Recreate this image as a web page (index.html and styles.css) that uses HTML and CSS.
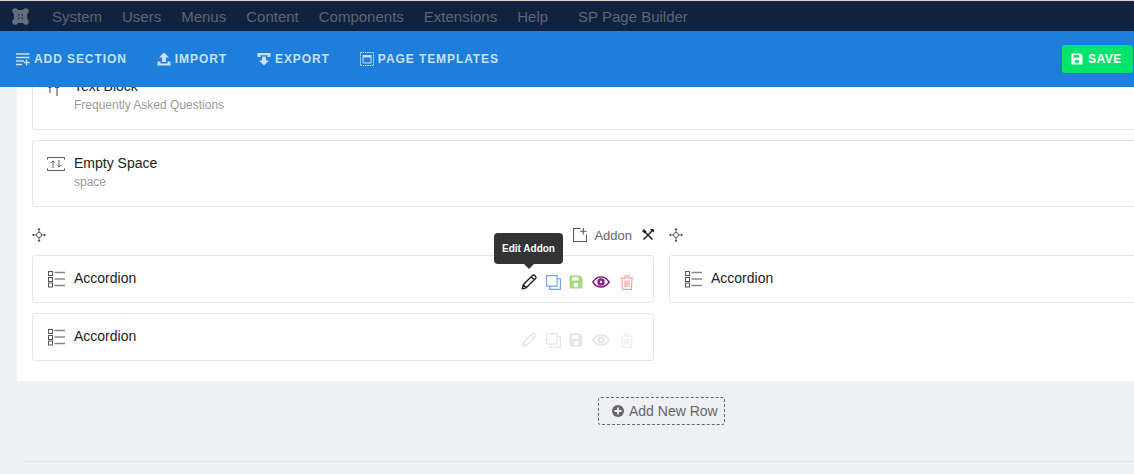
FILE: index.html
```html
<!DOCTYPE html>
<html lang="en">
<head>
<meta charset="utf-8">
<title>SP Page Builder</title>
<link rel="stylesheet" href="styles.css">
</head>
<body>
<svg class="defs" width="0" height="0" aria-hidden="true">
  <defs>
    <symbol id="i-move" viewBox="0 0 14 14"><g fill="none" stroke="currentColor" stroke-width="1"><circle cx="7" cy="7" r="2.500"/><path d="M7 0.500v4M7 9.500v4M0.500 7h4M9.500 7h4"/></g><path fill="currentColor" d="M7 0l1.600 2H5.400zM7 14l-1.600-2h3.200zM0 7l2-1.600v3.200zM14 7l-2 1.600V5.400z"/></symbol>
    <symbol id="i-list" viewBox="0 0 18 18"><g fill="none" stroke="currentColor" stroke-width="1"><rect x="1.500" y="1.500" width="4" height="4"/><rect x="1.500" y="7.500" width="4" height="4"/><rect x="1.500" y="13" width="4" height="4"/></g><path fill="none" stroke="currentColor" stroke-opacity=".7" stroke-width="1.300" d="M7.500 2.500h10.500M7.500 9h10.500M7.500 15.500h10.500"/></symbol>
    <symbol id="i-pencil" viewBox="0 0 16 16"><path fill="none" stroke="currentColor" stroke-width="1.300" stroke-linejoin="round" d="M1.200 14.800l1-4L11.500 1.500a1.500 1.500 0 0 1 2.100 0l.9.900a1.500 1.500 0 0 1 0 2.100L5.200 13.800zM2.200 10.800l3 3M10.200 2.800l3 3"/></symbol>
    <symbol id="i-copy" viewBox="0 0 15 15"><path fill="none" stroke="currentColor" stroke-width="1.100" d="M.6.600h10.500v10.500H.6zM11.100 3.800h3.300v10.600H3.800v-3.300"/></symbol>
    <symbol id="i-save" viewBox="0 0 14 14"><path fill="currentColor" fill-rule="evenodd" d="M1.500.5h9.500L13.500 3v9.500a1 1 0 0 1-1 1h-11a1 1 0 0 1-1-1v-11a1 1 0 0 1 1-1zM3 2.200v3.300h6.500V2.200zM7 7.700a2.300 2.300 0 1 0 0 4.600 2.300 2.300 0 0 0 0-4.600z"/></symbol>
    <symbol id="i-eye" viewBox="0 0 18 12"><path fill="none" stroke="currentColor" stroke-width="1.500" d="M.9 6C3 2.600 5.800 1 9 1s6 1.600 8.100 5C15 9.400 12.200 11 9 11S3 9.400.9 6z"/><circle cx="9" cy="6" r="3.700" fill="currentColor"/><circle cx="9" cy="6" r="1.200" fill="#fff"/></symbol>
    <symbol id="i-trash" viewBox="0 0 14 15"><path fill="none" stroke="currentColor" stroke-width="1.100" d="M.5 3h13M5 3V.8h4V3M2 3l.5 11.400h9L12 3M5 5.500v6.500M7 5.500v6.500M9 5.500v6.500"/></symbol>
  </defs>
</svg>

<header class="header">
  <nav class="nav">
    <svg class="nav-logo" viewBox="0 0 18 18" aria-hidden="true"><g fill="none" stroke="#666d7b" stroke-width="5.500"><path d="M4 4l10 10M14 4L4 14"/></g><g fill="#666d7b"><circle cx="3.300" cy="3.300" r="3"/><circle cx="14.700" cy="3.300" r="3"/><circle cx="3.300" cy="14.700" r="3"/><circle cx="14.700" cy="14.700" r="3"/><path d="M5 2h8v3H5zM5 13h8v3H5zM2 5h3v8H2zM13 5h3v8h-3z"/></g><g fill="#11223e"><rect x="6.500" y="6.500" width="1.500" height="1.500"/><rect x="10" y="6.500" width="1.500" height="1.500"/><rect x="6.500" y="10" width="1.500" height="1.500"/><rect x="10" y="10" width="1.500" height="1.500"/></g></svg>
    <a class="nav-link">System</a>
    <a class="nav-link">Users</a>
    <a class="nav-link">Menus</a>
    <a class="nav-link">Content</a>
    <a class="nav-link">Components</a>
    <a class="nav-link">Extensions</a>
    <a class="nav-link">Help</a>
    <a class="nav-link nav-link-sp">SP Page Builder</a>
  </nav>
  <div class="toolbar">
    <a class="tool">
      <svg class="tool-icon" viewBox="0 0 14 14" aria-hidden="true"><path fill="none" stroke="currentColor" stroke-width="1.300" d="M0 2h13.500M0 5.500h13.500M0 9h8M0 12.500h6M10.500 7.500v6M7.800 10.500h5.700"/></svg>
      ADD SECTION
    </a>
    <a class="tool">
      <svg class="tool-icon" viewBox="0 0 14 14" aria-hidden="true"><path fill="currentColor" d="M7 .5l5 5H9v4.500H5V5.500H2zM.5 9.500H3.500V11.500h7V9.500h3v4H.5z"/></svg>
      IMPORT
    </a>
    <a class="tool">
      <svg class="tool-icon" viewBox="0 0 14 14" aria-hidden="true"><path fill="currentColor" d="M.5 1h13v4h-3V3.200h-7V5h-3zM5 4.500h4V8.500h3l-5 5-5-5h3z"/></svg>
      EXPORT
    </a>
    <a class="tool">
      <svg class="tool-icon" viewBox="0 0 14 14" aria-hidden="true"><path fill="none" stroke="currentColor" d="M.5.500h13v13H.5z" stroke-dasharray="1.500 .7"/><path fill="currentColor" d="M2.500 3h9v2h-9z"/><path fill="none" stroke="currentColor" d="M3 5h8v6H3z"/></svg>
      PAGE TEMPLATES
    </a>
    <a class="save">
      <svg class="save-icon" viewBox="0 0 14 14" aria-hidden="true"><use href="#i-save"/></svg>
      SAVE
    </a>
  </div>
</header>

<main class="main">
  <section class="panel">
    <div class="addon addon-tall">
      <svg class="addon-icon" viewBox="0 0 18 18" aria-hidden="true"><g fill="none" stroke="currentColor" stroke-width="1.100"><path d="M10 3v15M8 9.500h4"/><path d="M3 3v12M1.500 9.500h3"/></g></svg>
      <div>
        <div class="addon-name">Text Block</div>
        <div class="addon-sub">Frequently Asked Questions</div>
      </div>
    </div>
    <div class="addon addon-tall">
      <svg class="addon-icon" viewBox="0 0 18 18" aria-hidden="true"><g fill="none" stroke="currentColor" stroke-width="1"><path d="M.5 4.500V2.500h17v2M.5 13.500v2h17v-2"/><path stroke-width=".9" d="M6 13V6M3.800 8L6 5.800 8.200 8M12 5v7M9.800 10l2.200 2.200 2.200-2.200"/></g></svg>
      <div>
        <div class="addon-name">Empty Space</div>
        <div class="addon-sub">space</div>
      </div>
    </div>

    <div class="columns">
      <div class="column">
        <div class="col-head">
          <svg class="move"><use href="#i-move"/></svg>
          <div class="col-actions">
            <svg class="add-icon" viewBox="0 0 15 15" aria-hidden="true"><path fill="none" stroke="currentColor" stroke-width="1.100" d="M8 .6H.6v13.800h13.800V7M11 0v7M7.500 3.500h7"/></svg>
            <span class="col-addon">Addon</span>
            <svg class="tools-icon" viewBox="0 0 12 12" aria-hidden="true"><path fill="none" stroke="#222" stroke-width="1.500" d="M1.500 10.500L10 2M2 2l8.500 8.500"/><path fill="#222" d="M0 2L2 0l2.500 2.500-2 2zM8 0h3l1 1v2.500L9.500 2z"/></svg>
          </div>
        </div>
        <div class="addon addon-short">
          <svg class="addon-icon"><use href="#i-list"/></svg>
          <div class="addon-name">Accordion</div>
          <div class="actions">
            <span class="act act-pencil">
              <svg class="act-edit"><use href="#i-pencil"/></svg>
              <span class="tip">Edit Addon</span>
            </span>
            <svg class="act-copy"><use href="#i-copy"/></svg>
            <svg class="act-save"><use href="#i-save"/></svg>
            <svg class="act-eye"><use href="#i-eye"/></svg>
            <svg class="act-trash"><use href="#i-trash"/></svg>
          </div>
        </div>
        <div class="addon addon-short">
          <svg class="addon-icon"><use href="#i-list"/></svg>
          <div class="addon-name">Accordion</div>
          <div class="actions actions-dim">
            <span class="act"><svg class="act-edit"><use href="#i-pencil"/></svg></span>
            <svg class="act-copy"><use href="#i-copy"/></svg>
            <svg class="act-save"><use href="#i-save"/></svg>
            <svg class="act-eye"><use href="#i-eye"/></svg>
            <svg class="act-trash"><use href="#i-trash"/></svg>
          </div>
        </div>
      </div>
      <div class="column">
        <div class="col-head">
          <svg class="move"><use href="#i-move"/></svg>
        </div>
        <div class="addon addon-short">
          <svg class="addon-icon"><use href="#i-list"/></svg>
          <div class="addon-name">Accordion</div>
        </div>
      </div>
    </div>
  </section>

  <div class="add-row-wrap">
    <a class="add-row">
      <svg class="add-row-icon" viewBox="0 0 12 12" aria-hidden="true"><circle cx="6" cy="6" r="6" fill="currentColor"/><path stroke="#eff0f4" stroke-width="1.800" d="M6 2.500v7M2.500 6h7"/></svg>
      Add New Row
    </a>
  </div>
  <hr class="rule">
</main>
</body>
</html>
```

FILE: styles.css
```css
* { box-sizing: border-box; }

html, body {
  margin: 0;
  height: 474px;
  overflow: hidden;
}

body {
  background: #eff0f4;
  font-family: "Liberation Sans", Arial, sans-serif;
  color: #222;
}

.defs { position: absolute; }

.header {
  position: relative;
  z-index: 5;
}

.nav {
  height: 31px;
  display: flex;
  align-items: center;
  gap: 20px;
  background: #11223e;
  border-top: 1px solid #d8cfc6;
  padding-left: 12px;
}

.nav-logo {
  width: 17px;
  height: 17px;
  margin-right: 3px;
}

.nav-link {
  font-size: 15px;
  color: #5b6577;
}

.nav-link-sp { margin-left: 10px; }

.toolbar {
  height: 56px;
  display: flex;
  align-items: center;
  gap: 30px;
  background: #1e7edb;
  padding: 0 1px 0 16px;
}

.tool {
  display: flex;
  align-items: center;
  gap: 4px;
  font-size: 12px;
  font-weight: 700;
  letter-spacing: .92px;
  color: #c9e0f7;
}

.tool-icon {
  width: 14px;
  height: 14px;
}

.save {
  margin-left: auto;
  width: 71px;
  height: 28px;
  display: flex;
  align-items: center;
  gap: 5px;
  padding-left: 9px;
  background: #00e36c;
  border-radius: 3px;
  font-size: 12px;
  font-weight: 700;
  letter-spacing: .5px;
  color: #fff;
}

.save-icon {
  width: 12px;
  height: 12px;
  color: #fff;
}

.main {
  margin-top: -39px;
  overflow: hidden;
}

.panel {
  margin-left: 17px;
  width: 1117px;
  height: 333px;
  overflow: hidden;
  background: #fff;
  padding: 15px 0 15px 15px;
}

.addon {
  position: relative;
  display: flex;
  background: #fff;
  border: 1px solid #e6e6e6;
  border-radius: 3px;
}

.addon-tall {
  width: 1200px;
  height: 67px;
  margin-bottom: 10px;
  padding: 12px 14px;
  gap: 9px;
}

.addon-short {
  height: 48px;
  margin-bottom: 10px;
  padding: 12px 14px;
  gap: 9px;
}

.addon-icon {
  width: 18px;
  height: 18px;
  margin-top: 2px;
  flex: none;
  color: #555;
}

.addon-name {
  font-size: 14px;
  line-height: 20px;
  color: #222;
}

.addon-sub {
  margin-top: 1px;
  font-size: 12px;
  line-height: 16px;
  color: #9a9a9a;
}

.columns {
  display: flex;
  gap: 15px;
  margin-top: 18px;
}

.column {
  width: 622px;
  flex: none;
}

.column:last-child { width: 640px; }

.col-head {
  height: 30px;
  display: flex;
  align-items: flex-start;
  justify-content: space-between;
}

.move {
  width: 14px;
  height: 14px;
  color: #555;
  margin-top: 3px;
}

.col-actions {
  display: flex;
  align-items: center;
  height: 20px;
}

.add-icon {
  width: 14px;
  height: 14px;
  color: #555;
}

.col-addon {
  margin-left: 7px;
  font-size: 13px;
  color: #666;
}

.tools-icon {
  width: 12px;
  height: 12px;
  margin-left: 10px;
}

.actions {
  position: absolute;
  right: 19px;
  top: 18px;
  display: flex;
  align-items: center;
}

.act { position: relative; display: flex; }

.act-edit { width: 16px; height: 16px; color: #1b1b1b; }
.act-copy { width: 15px; height: 15px; color: #6ea0f6; margin-left: 9px; }
.act-save { width: 14px; height: 14px; color: #a8d884; margin-left: 8px; }
.act-eye { width: 18px; height: 12px; color: #8a1f8e; margin-left: 9px; }
.act-trash { width: 14px; height: 15px; color: #f49a8f; margin-left: 10px; }

.actions-dim .act-edit,
.actions-dim .act-copy,
.actions-dim .act-save,
.actions-dim .act-eye { color: #e6e6e6; }
.actions-dim .act-trash { color: #f5ebe4; }

.tip {
  position: absolute;
  left: -27px;
  bottom: 26px;
  width: 69px;
  height: 31px;
  display: flex;
  align-items: center;
  justify-content: center;
  background: #333;
  border-radius: 4px;
  font-size: 10px;
  font-weight: 700;
  color: #fff;
  white-space: nowrap;
}

.tip::after {
  content: "";
  position: absolute;
  left: 30px;
  top: 100%;
  border: 5px solid transparent;
  border-top-color: #333;
  border-bottom: 0;
}

.add-row-wrap {
  display: flex;
  margin-top: 16px;
  padding-left: 598px;
}

.add-row {
  width: 127px;
  height: 28px;
  display: flex;
  align-items: center;
  gap: 5px;
  padding-left: 13px;
  border: 1px dashed #666;
  border-radius: 3px;
  font-size: 14px;
  color: #666;
}

.add-row-icon {
  width: 12px;
  height: 12px;
}

.rule {
  margin: 36px 0 0 22px;
  border: 0;
  border-top: 1px solid #e2e3e8;
}
```
